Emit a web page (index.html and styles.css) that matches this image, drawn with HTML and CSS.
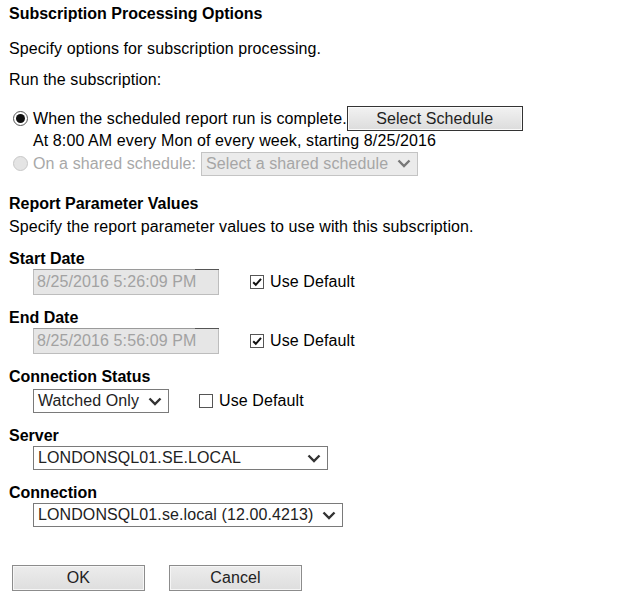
FILE: index.html
```html
<!DOCTYPE html>
<html>
<head>
<meta charset="utf-8">
<link rel="stylesheet" href="styles.css">
</head>
<body>
<div class="page">
  <div class="title">Subscription Processing Options</div>
  <div class="desc desc-first">Specify options for subscription processing.</div>
  <div class="desc">Run the subscription:</div>

  <div class="run-options">
    <div class="opt-row">
      <span class="radio checked"></span>
      <span class="opt-text">When the scheduled report run is complete.</span>
      <span class="btn btn-schedule">Select Schedule</span>
    </div>
    <div class="schedule-text">At 8:00 AM every Mon of every week, starting 8/25/2016</div>
    <div class="opt-row is-disabled">
      <span class="radio off"></span>
      <span class="opt-text">On a shared schedule:</span>
      <span class="select select-shared off">
        <span class="select-value">Select a shared schedule</span>
        <svg class="chev" width="14" height="9" viewBox="0 0 14 9"><path d="M1.5 1.5 L7 7 L12.5 1.5" fill="none" stroke="currentColor" stroke-width="2.4"/></svg>
      </span>
    </div>
  </div>

  <div class="section">Report Parameter Values</div>
  <div class="section-desc">Specify the report parameter values to use with this subscription.</div>

  <div class="param">
    <div class="param-label">Start Date</div>
    <div class="param-row">
      <span class="input off">8/25/2016 5:26:09 PM</span>
      <span class="check"><span class="box"><svg width="12" height="12" viewBox="0 0 12 12"><path d="M2.2 6.2 L4.8 8.8 L10 2.8" fill="none" stroke="#111" stroke-width="2"/></svg></span>Use Default</span>
    </div>
  </div>

  <div class="param">
    <div class="param-label">End Date</div>
    <div class="param-row">
      <span class="input off">8/25/2016 5:56:09 PM</span>
      <span class="check"><span class="box"><svg width="12" height="12" viewBox="0 0 12 12"><path d="M2.2 6.2 L4.8 8.8 L10 2.8" fill="none" stroke="#111" stroke-width="2"/></svg></span>Use Default</span>
    </div>
  </div>

  <div class="param param-status">
    <div class="param-label">Connection Status</div>
    <div class="param-row row-status">
      <span class="select select-status">
        <span class="select-value">Watched Only</span>
        <svg class="chev" width="14" height="9" viewBox="0 0 14 9"><path d="M1.5 1.5 L7 7 L12.5 1.5" fill="none" stroke="currentColor" stroke-width="2.4"/></svg>
      </span>
      <span class="check check-status"><span class="box"></span>Use Default</span>
    </div>
  </div>

  <div class="param param-server">
    <div class="param-label">Server</div>
    <div class="param-row">
      <span class="select select-server">
        <span class="select-value">LONDONSQL01.SE.LOCAL</span>
        <svg class="chev" width="14" height="9" viewBox="0 0 14 9"><path d="M1.5 1.5 L7 7 L12.5 1.5" fill="none" stroke="currentColor" stroke-width="2.4"/></svg>
      </span>
    </div>
  </div>

  <div class="param">
    <div class="param-label">Connection</div>
    <div class="param-row">
      <span class="select select-conn">
        <span class="select-value">LONDONSQL01.se.local (12.00.4213)</span>
        <svg class="chev" width="14" height="9" viewBox="0 0 14 9"><path d="M1.5 1.5 L7 7 L12.5 1.5" fill="none" stroke="currentColor" stroke-width="2.4"/></svg>
      </span>
    </div>
  </div>

  <div class="actions">
    <span class="btn btn-action">OK</span>
    <span class="btn btn-action">Cancel</span>
  </div>
</div>
</body>
</html>
```

FILE: styles.css
```css
* { box-sizing: border-box; }
html, body { margin: 0; padding: 0; background: #fff; }
body {
  font-family: "Liberation Sans", Arial, sans-serif;
  font-size: 16px;
  letter-spacing: 0.1px;
  color: #000;
}
.page {
  padding: 5px 0 0 9px;
  display: flex;
  flex-direction: column;
}
.title {
  font-weight: bold;
  line-height: 18px;
  letter-spacing: 0;
}
.desc {
  line-height: 18px;
  margin-top: 13px;
}
.desc.desc-first { margin-top: 17px; }
.run-options {
  display: flex;
  flex-direction: column;
  margin-top: 17px;
  padding-left: 4px;
}
.opt-row {
  display: flex;
  align-items: center;
  height: 25px;
}
.opt-row.is-disabled { color: #a8a8a8; }
.radio {
  width: 15px;
  height: 15px;
  border-radius: 50%;
  border: 1px solid #555;
  background: #fff;
  display: flex;
  align-items: center;
  justify-content: center;
  margin-right: 5px;
}
.radio.checked::after {
  content: "";
  width: 9px;
  height: 9px;
  border-radius: 50%;
  background: #111;
}
.radio.off { border-color: #c8c8c8; background: #e4e4e4; }
.opt-text { line-height: 18px; }
.btn {
  display: flex;
  align-items: center;
  justify-content: center;
  background: linear-gradient(#f2f2f2, #dcdcdc);
  color: #222;
}
.btn-schedule {
  width: 176px;
  height: 25px;
  border: 1px solid #333;
  margin-left: 0;
  box-shadow: inset 0 0 0 1px #fafafa;
}
.schedule-text {
  padding-left: 20px;
  line-height: 20px;
}
.select {
  display: flex;
  align-items: center;
  justify-content: space-between;
  border: 1px solid #7a7a7a;
  background: #fff;
  height: 24px;
  padding: 0 6px 0 4px;
  color: #222;
}
.select .chev { color: #333; flex-shrink: 0; }
.select.off {
  background: #ebebeb;
  border-color: #c4c4c4;
  color: #a6a6a6;
}
.select.off .chev { color: #777; }
.select-shared { width: 217px; margin-left: 5px; }
.section {
  font-weight: bold;
  line-height: 18px;
  letter-spacing: 0;
  margin-top: 19px;
}
.section-desc {
  line-height: 18px;
  margin-top: 5px;
}
.param {
  display: flex;
  flex-direction: column;
  margin-top: 14px;
}
.param-label {
  font-weight: bold;
  line-height: 18px;
  letter-spacing: 0;
}
.param-row {
  display: flex;
  align-items: center;
  padding-left: 24px;
  margin-top: 1px;
}
.param-row.row-status { margin-top: 3px; }
.input {
  position: relative;
  width: 186px;
  height: 26px;
  display: flex;
  align-items: center;
  padding-left: 3px;
  border: 1px solid #bdbdbd;
  border-top-color: #9a9a9a;
}
.input::after {
  content: "";
  position: absolute;
  top: -1px;
  right: -1px;
  width: 24px;
  height: 1px;
  background: #555;
}
.input.off { background: #e6e6e6; color: #a2a2a2; }
.check {
  display: flex;
  align-items: center;
  margin-left: 31px;
  line-height: 18px;
}
.check-status { margin-left: 30px; }
.box {
  width: 14px;
  height: 14px;
  border: 1px solid #555;
  background: #fff;
  display: flex;
  align-items: center;
  justify-content: center;
  margin-right: 6px;
}
.select-status { width: 136px; }
.select-server { width: 295px; }
.select-conn { width: 310px; }
.actions {
  display: flex;
  gap: 24px;
  margin-top: 38px;
  padding-left: 3px;
}
.btn-action {
  width: 133px;
  height: 26px;
  border: 1px solid #8c8c8c;
  background: linear-gradient(#ececec, #dedede);
  box-shadow: inset 0 0 0 1px #f6f6f6;
}
```
